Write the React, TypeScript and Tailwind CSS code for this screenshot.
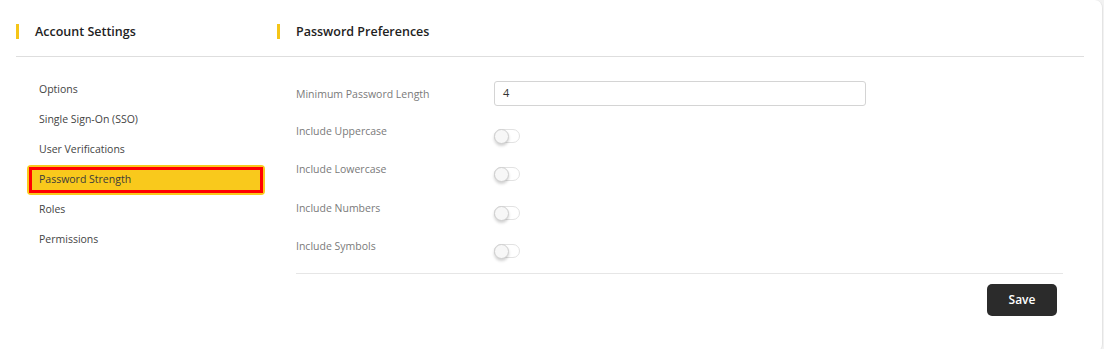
import React from 'react';

const menu = ['Options', 'Single Sign-On (SSO)', 'User Verifications', 'Password Strength', 'Roles', 'Permissions'];
const toggles = ['Include Uppercase', 'Include Lowercase', 'Include Numbers', 'Include Symbols'];

const Toggle: React.FC = () => (
  <div className="relative w-[26px] h-[14px] mt-[6px] rounded-full border border-[#e2e2e2] bg-white">
    <div className="absolute left-[-1px] top-[-1px] w-[15px] h-[15px] rounded-full bg-[#f7f7f7] border border-[#cfcfcf] shadow-[0_2px_3px_rgba(0,0,0,0.18)]" />
  </div>
);

const App: React.FC = () => {
  return (
    <div className="w-[1104px] h-[349px] bg-[#f2f2f2] font-['Open_Sans',sans-serif] overflow-hidden">
      <div className="w-[1103px] h-[352px] bg-white rounded-r-lg border-r border-[#e4e4e4] pl-4 pr-[18px] pt-[23px]">
        {/* header */}
        <div className="flex h-[34px] border-b border-[#dedede]">
          <div className="w-[261px] flex items-start">
            <span className="w-[3px] h-[15px] mt-[1px] bg-[#f5c518]" />
            <span className="ml-4 text-[12.5px] leading-[17px] font-semibold text-[#222]">Account Settings</span>
          </div>
          <div className="flex-1 flex items-start">
            <span className="w-[3px] h-[15px] mt-[1px] bg-[#f5c518]" />
            <span className="ml-4 text-[12.5px] leading-[17px] font-semibold text-[#222]">Password Preferences</span>
          </div>
        </div>

        {/* body */}
        <div className="flex">
          <nav className="w-[261px] pl-[11px] pr-[12px] pt-[18px]">
            {menu.map((item) =>
              item === 'Password Strength' ? (
                <div key={item} className="h-[30px] rounded-sm bg-[#f9c91c] p-[2px]">
                  <div className="h-full border-[3px] border-[#ff0000] pl-[7px] flex items-center text-[10.5px] text-[#3b3b3b]">
                    {item}
                  </div>
                </div>
              ) : (
                <div key={item} className="h-[30px] px-3 flex items-center text-[10.5px] text-[#444]">
                  {item}
                </div>
              )
            )}
          </nav>

          <div className="flex-1 pl-[19px] pr-[21px] pt-[24px]">
            <div className="flex items-center h-[25px]">
              <div className="w-[198px] pt-[2px] text-[10.5px] text-[#7a7a7a]">Minimum Password Length</div>
              <div className="w-[372px] h-[25px] border border-[#d4d4d4] rounded-[3px] pl-2 flex items-center text-[11px] text-[#333]">
                4
              </div>
            </div>
            <div className="mt-[16px]">
              {toggles.map((t) => (
                <div key={t} className="flex items-start h-[38.4px] pt-[1px]">
                  <div className="w-[198px] text-[10.5px] leading-[16px] text-[#7a7a7a]">{t}</div>
                  <Toggle />
                </div>
              ))}
            </div>
            <div className="-mt-[3px] border-t border-[#e6e6e6] flex justify-end pt-[10px] pr-[6px]">
              <button className="w-[70px] h-[32px] rounded-[5px] bg-[#2b2b2b] text-white text-[12px] font-semibold">
                Save
              </button>
            </div>
          </div>
        </div>
      </div>
    </div>
  );
};

export default App;
